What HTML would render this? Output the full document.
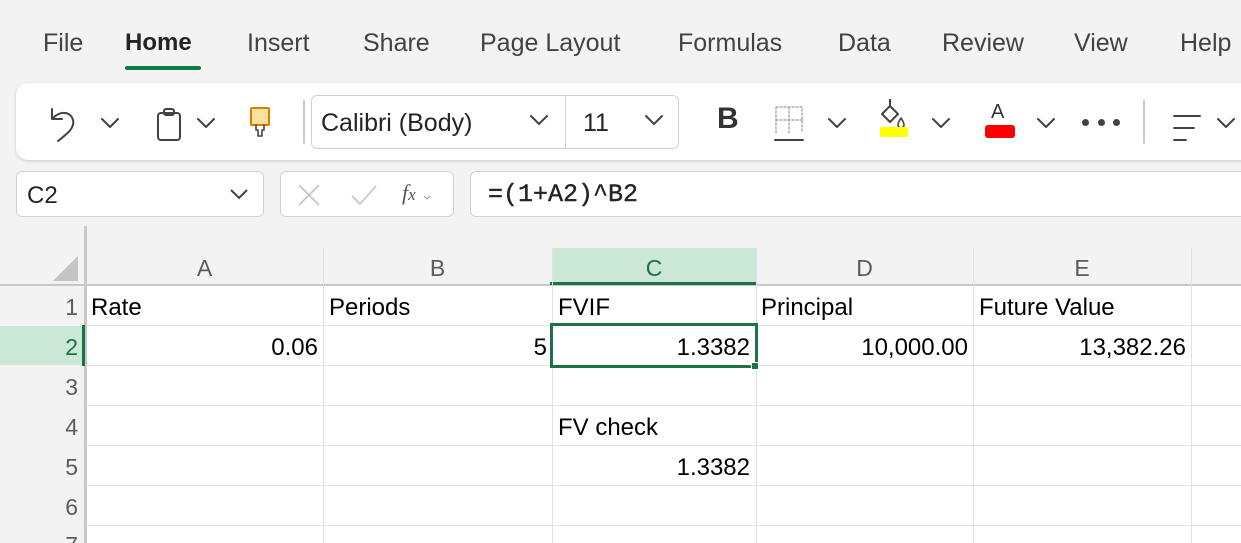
<!DOCTYPE html>
<html><head><meta charset="utf-8"><style>
*{margin:0;padding:0;box-sizing:border-box}
html,body{width:1241px;height:543px;overflow:hidden}
body{background:#f3f3f3;font-family:"Liberation Sans",sans-serif;position:relative;color:#242424}
.a{position:absolute}
.tab{position:absolute;top:29px;font-size:25px;color:#424242;white-space:nowrap}
.ribbon{position:absolute;left:16px;top:83px;width:1240px;height:77px;background:#fff;border-radius:12px;box-shadow:0 1px 3px rgba(0,0,0,.18)}
.box{position:absolute;background:#fff;border:1px solid #d1d1d1;border-radius:6px}
.t{position:absolute;font-size:24px;white-space:nowrap;color:#000}
.hl{position:absolute;left:86px;width:1155px;height:1px;background:#e1e1e1}
.vl{position:absolute;top:248px;width:1px;height:295px;background:#e1e1e1}
.ch{position:absolute;top:255px;font-size:23px;color:#5c5c5c;text-align:center}
.rh{position:absolute;left:0;width:78px;text-align:right;font-size:23px;color:#5c5c5c}
</style></head><body>
<div class="tab" style="left:43px">File</div>
<div class="tab" style="left:125px;color:#242424;font-weight:bold;font-size:24px">Home</div>
<div class="a" style="left:125px;top:66px;width:76px;height:4px;border-radius:2px;background:#107c41"></div>
<div class="tab" style="left:247px">Insert</div>
<div class="tab" style="left:363px">Share</div>
<div class="tab" style="left:480px">Page Layout</div>
<div class="tab" style="left:678px">Formulas</div>
<div class="tab" style="left:838px">Data</div>
<div class="tab" style="left:942px">Review</div>
<div class="tab" style="left:1074px">View</div>
<div class="tab" style="left:1180px">Help</div>

<div class="ribbon"></div>
<svg class="a" style="left:0;top:83px" width="1241" height="77" fill="none" stroke="#424242" stroke-width="2" stroke-linecap="round" stroke-linejoin="round">
<path d="M52 26 v10 h10"/><path d="M53 35 c8-8 18-6 20 2 c2 8-6 14-15 21"/>
<path d="M102 36 l8 8 l8-8 M198 36 l8 8 l8-8"/>
<rect x="158" y="30" width="22" height="27" rx="3"/><rect x="164" y="26" width="10" height="6" rx="2"/>
<rect x="251" y="25" width="18" height="17" rx="1" fill="#fae19d" stroke="#e07b00"/><path d="M256 42 v5 h2 v6 h4 v-6 h2 v-5" stroke-width="1.6"/>
<path d="M304 18 v42" stroke="#c8c8c8"/>
<path d="M531 36 l8 8 l8-8 M646 36 l8 8 l8-8 M829 36 l8 8 l8-8 M933 36 l8 8 l8-8 M1038 36 l8 8 l8-8 M1218 36 l8 8 l8-8"/>
<path d="M776 24 h26 v26 M776 24 v26 M789 24 v26 M776 37 h26" stroke="#999" stroke-dasharray="2 2" stroke-width="1.2"/>
<path d="M775 57 h28" stroke-width="2"/>
<path d="M1144 18 v42" stroke="#c8c8c8"/>
<path d="M1174 33 h26 M1174 45 h20 M1174 57 h12"/>
</svg>
<div class="a" style="left:717px;top:102px;font-size:30px;font-weight:bold;color:#333">B</div>
<svg class="a" style="left:870px;top:97px" width="50" height="45" fill="none" stroke="#424242" stroke-width="2" stroke-linejoin="round">
<path d="M20 2 v7"/><path d="M20 9 l8 8 l-8 8 l-8 -8 z"/><path d="M28 28 c0-3 2-5 3-7 c1 2 3 4 3 7 a3 3 0 0 1-6 0z" stroke-width="1.6"/>
<rect x="10" y="30" width="28" height="10" rx="2" fill="#ffff00" stroke="none"/></svg>
<div class="a" style="left:991px;top:101px;font-size:20px;color:#333">A</div>
<div class="a" style="left:985px;top:125px;width:30px;height:13px;border-radius:3px;background:#f00"></div>
<div class="a" style="left:1082px;top:119px;width:7px;height:7px;border-radius:50%;background:#424242"></div>
<div class="a" style="left:1098px;top:119px;width:7px;height:7px;border-radius:50%;background:#424242"></div>
<div class="a" style="left:1113px;top:119px;width:7px;height:7px;border-radius:50%;background:#424242"></div>

<div class="box" style="left:311px;top:95px;width:368px;height:54px"></div>
<div class="a" style="left:565px;top:95px;width:1px;height:54px;background:#d1d1d1"></div>
<div class="a" style="left:321px;top:109px;font-size:25px;color:#242424">Calibri (Body)</div>
<div class="a" style="left:583px;top:109px;font-size:25px;color:#242424">11</div>
<svg class="a" style="left:528px;top:112px" width="140" height="20" fill="none" stroke="#424242" stroke-width="2" stroke-linecap="round"><path d="M3 4 l8 8 l8-8 M118 4 l8 8 l8-8"/></svg>

<div class="box" style="left:16px;top:171px;width:248px;height:46px"></div>
<div class="a" style="left:27px;top:182px;font-size:24px">C2</div>
<svg class="a" style="left:228px;top:186px" width="22" height="16" fill="none" stroke="#424242" stroke-width="2"><path d="M3 4 l8 8 l8-8"/></svg>
<div class="box" style="left:280px;top:171px;width:174px;height:46px"></div>
<svg class="a" style="left:290px;top:178px" width="160" height="34" fill="none" stroke="#c4c4c4" stroke-width="1.6"><path d="M9 7 l20 20 M29 7 l-20 20 M62 18 l8 8 l16-18"/><path d="M134 18 l3 3 l3-3" stroke="#999" stroke-width="1"/></svg>
<div class="a" style="left:402px;top:180px;font-size:22px;font-style:italic;font-family:'Liberation Serif',serif;color:#555">f<span style="font-size:17px">x</span></div>
<div class="box" style="left:470px;top:171px;width:800px;height:46px"></div>
<div class="a" style="left:488px;top:180px;font-size:25px;font-family:'Liberation Mono',monospace;color:#242424;-webkit-text-stroke:0.4px #242424">=(1+A2)^B2</div>

<div class="a" style="left:0;top:285px;width:1241px;height:258px;background:#fff"></div>
<div class="a" style="left:0;top:285px;width:86px;height:258px;background:#f3f3f3"></div>
<div class="a" style="left:0;top:284px;width:1241px;height:2px;background:#c8c8c8"></div>
<div class="a" style="left:84px;top:226px;width:3px;height:317px;background:#c8c8c8"></div>
<svg class="a" style="left:50px;top:253px" width="30" height="30"><path d="M28 3 v25 h-25 z" fill="#c4c4c4"/></svg>
<div class="a" style="left:552px;top:248px;width:204px;height:37px;background:#cae8d5"></div>
<div class="a" style="left:550px;top:282px;width:207px;height:3px;background:#1e7145"></div>
<div class="a" style="left:0;top:326px;width:83px;height:39px;background:#cae8d5"></div>
<div class="a" style="left:82px;top:325px;width:3px;height:41px;background:#1e7145"></div>
<div class="vl" style="left:323px"></div><div class="vl" style="left:552px"></div><div class="vl" style="left:756px"></div><div class="vl" style="left:973px"></div><div class="vl" style="left:1191px"></div>
<div class="hl" style="top:325px"></div><div class="hl" style="top:365px"></div><div class="hl" style="top:405px"></div><div class="hl" style="top:445px"></div><div class="hl" style="top:485px"></div><div class="hl" style="top:525px"></div>
<div class="ch" style="left:86px;width:237px">A</div>
<div class="ch" style="left:323px;width:229px">B</div>
<div class="ch" style="left:552px;width:204px;color:#1e7145">C</div>
<div class="ch" style="left:756px;width:217px">D</div>
<div class="ch" style="left:973px;width:218px">E</div>
<div class="rh" style="top:294px">1</div>
<div class="rh" style="top:334px;color:#1e7145">2</div>
<div class="rh" style="top:374px">3</div>
<div class="rh" style="top:414px">4</div>
<div class="rh" style="top:454px">5</div>
<div class="rh" style="top:494px">6</div>
<div class="rh" style="top:532px">7</div>
<div class="t" style="left:91px;top:294px">Rate</div>
<div class="t" style="left:329px;top:294px">Periods</div>
<div class="t" style="left:558px;top:294px">FVIF</div>
<div class="t" style="left:761px;top:294px">Principal</div>
<div class="t" style="left:979px;top:294px">Future Value</div>
<div class="t" style="right:923px;top:334px">0.06</div>
<div class="t" style="right:694px;top:334px">5</div>
<div class="t" style="right:491px;top:334px">1.3382</div>
<div class="t" style="right:273px;top:334px">10,000.00</div>
<div class="t" style="right:55px;top:334px">13,382.26</div>
<div class="t" style="left:558px;top:414px">FV check</div>
<div class="t" style="right:491px;top:454px">1.3382</div>
<div class="a" style="left:550px;top:323px;width:208px;height:45px;border:3px solid #1e7145"></div>
<div class="a" style="left:751px;top:362px;width:8px;height:8px;background:#1e7145;border:1px solid #fff"></div>
</body></html>
